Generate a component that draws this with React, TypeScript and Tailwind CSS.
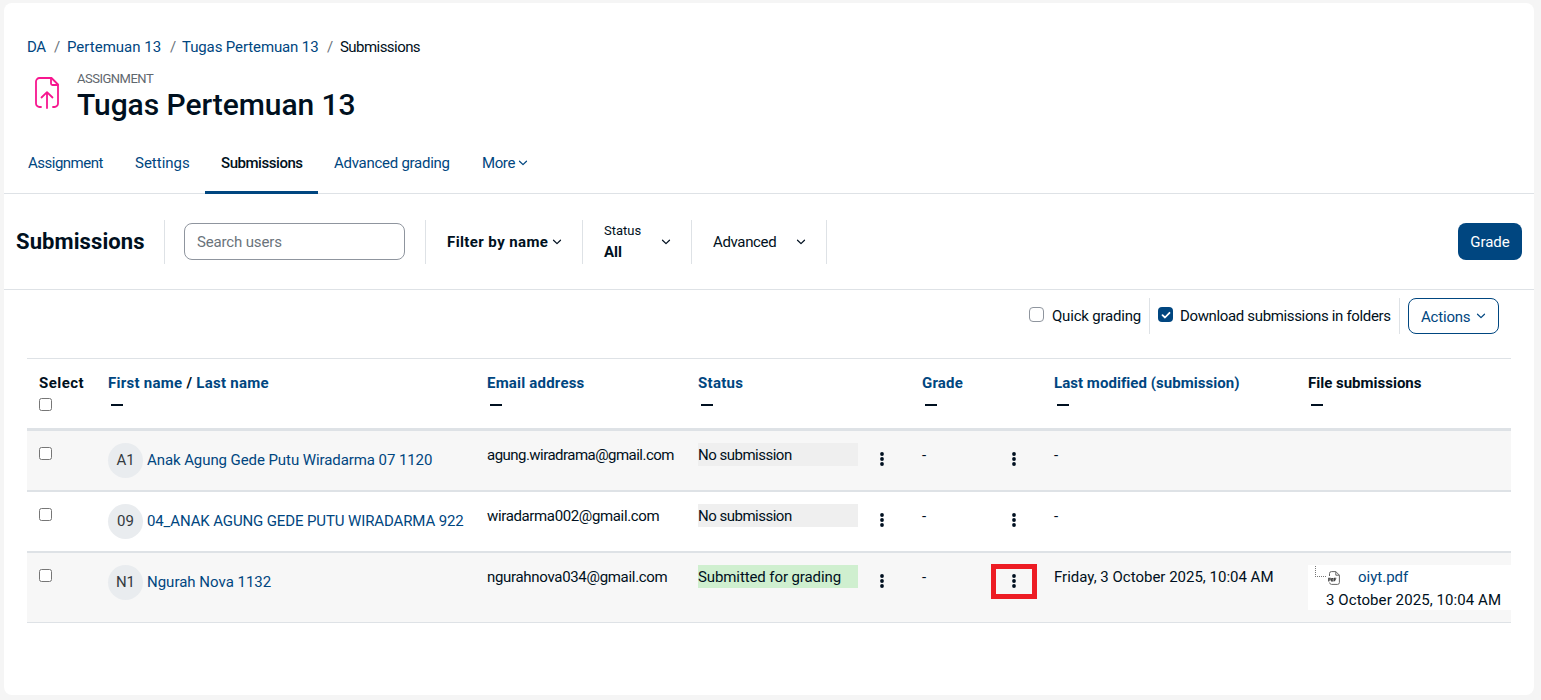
import { clsx } from "clsx";

interface Submission {
  initials: string;
  name: string;
  nameClass: string;
  email: string;
  emailClass: string;
  status: string;
  statusClass: string;
  modified: string;
  file?: { name: string; date: string };
}

const submissions: Submission[] = [
  {
    initials: "A1",
    name: "Anak Agung Gede Putu Wiradarma 07 1120",
    nameClass: "tracking-[-0.08px]",
    email: "agung.wiradrama@gmail.com",
    emailClass: "tracking-[-0.53px]",
    status: "No submission",
    statusClass: "bg-[#efefef] tracking-[-0.5px]",
    modified: "-",
  },
  {
    initials: "09",
    name: "04_ANAK AGUNG GEDE PUTU WIRADARMA 922",
    nameClass: "tracking-[-0.12px]",
    email: "wiradarma002@gmail.com",
    emailClass: "tracking-[-0.36px]",
    status: "No submission",
    statusClass: "bg-[#efefef] tracking-[-0.5px]",
    modified: "-",
  },
  {
    initials: "N1",
    name: "Ngurah Nova 1132",
    nameClass: "",
    email: "ngurahnova034@gmail.com",
    emailClass: "tracking-[-0.31px]",
    status: "Submitted for grading",
    statusClass: "bg-[#cfefcf] tracking-[-0.1px]",
    modified: "Friday, 3 October 2025, 10:04 AM",
    file: { name: "oiyt.pdf", date: "3 October 2025, 10:04 AM" },
  },
];

const columns = [
  { label: "Email address", link: true, className: "tracking-[0.2px]" },
  { label: "Status", link: true, className: "tracking-[0.3px]" },
  { label: "Grade", link: true, className: "tracking-[0.2px]" },
  { label: "Last modified (submission)", link: true, className: "tracking-[0.04px]" },
  { label: "File submissions", link: false, className: "" },
];

const rowGrid = "grid grid-cols-[69px_379px_211px_224px_132px_254px_215px]";

const Chevron = ({ className }: { className?: string }) => (
  <svg
    viewBox="0 0 10 6"
    className={clsx("h-[6px] w-[10px] shrink-0", className)}
    fill="none"
    stroke="currentColor"
    strokeWidth="1.2"
    strokeLinecap="round"
    strokeLinejoin="round"
  >
    <path d="M1.5 1.2 5 4.6 8.5 1.2" />
  </svg>
);

const Dots = () => (
  <svg viewBox="0 0 4 14" className="h-[14px] w-[4px]" fill="#001020">
    <circle cx="2" cy="2" r="1.9" />
    <circle cx="2" cy="7" r="1.9" />
    <circle cx="2" cy="12" r="1.9" />
  </svg>
);

const Checkbox = () => (
  <span className="block size-[13px] rounded-[2.5px] border border-[#767676] bg-white" />
);

const Divider = ({ className }: { className?: string }) => (
  <div className={clsx("w-px shrink-0 bg-[#dee2e6]", className)} />
);

const Dash = () => <div className="mt-2 ml-[3px] h-[2px] w-3 bg-[#001020]" />;

const AssignmentIcon = () => (
  <svg
    viewBox="0 0 24 32"
    className="h-8 w-6"
    fill="none"
    stroke="#f7168f"
    strokeWidth="1.8"
    strokeLinecap="round"
    strokeLinejoin="round"
  >
    <path d="M6 30H4.5A3.5 3.5 0 0 1 1 26.500V4.500A3.500 3.500 0 0 1 4.500 1H16.500L23 7.500V26.500A3.500 3.500 0 0 1 19.500 30H18" />
    <path d="M16 1.200V6.500A1.500 1.500 0 0 0 17.500 8H22.800" />
    <path d="M12 31V15.500M6.500 20.500 12 15.200 17.500 20.500" />
  </svg>
);

const PdfIcon = () => (
  <svg viewBox="0 0 12 14" className="h-[14px] w-3" fill="none" stroke="#666" strokeWidth="1">
    <path d="M1.500 5V2.500Q1.500.6 3.500.6H7.800L11.400 4.200V11.500Q11.400 13.400 9.500 13.400H3.500Q1.800 13.400 1.600 11.500" />
    <path d="M7.800.6V4.200H11.400" />
    <path stroke="#444" strokeWidth="1.100" d="M.7 10.500V7.200H2.200V9H.7M3.600 7.200V10H5V7.600H3.600M6.500 10.300V7.200H8.300M6.500 8.700H8" />
  </svg>
);

const Header = () => (
  <header>
    <nav className="flex h-[23px] pl-[23px] leading-[23px] whitespace-nowrap text-[#004680]">
      <a className="w-[27px] tracking-[-0.5px]">DA</a>
      <span className="w-[13px] text-[#6a737b]">/</span>
      <a className="w-[103px]">Pertemuan 13</a>
      <span className="w-[12px] text-[#6a737b]">/</span>
      <a className="w-[145px] tracking-[-0.12px]">Tugas Pertemuan 13</a>
      <span className="w-[13px] text-[#6a737b]">/</span>
      <span className="tracking-[-0.55px] text-[#001020]">Submissions</span>
    </nav>
    <div className="mt-[11px] flex pl-[31px]">
      <div className="mt-[7px] w-[42px]">
        <AssignmentIcon />
      </div>
      <div>
        <div className="text-[13px] leading-[18px] tracking-[-0.5px] text-[#5f676e]">ASSIGNMENT</div>
        <h1 className="text-[30px] leading-[34px] font-medium tracking-[-0.05px] text-[#001020]">
          Tugas Pertemuan 13
        </h1>
      </div>
    </div>
    <div className="mt-[10px] flex h-[62px] border-b border-[#dee2e6] pl-2 leading-[62px] text-[#004680]">
      <a className="w-[107px] pl-4 tracking-[-0.5px]">Assignment</a>
      <a className="w-[86px] pl-4">Settings</a>
      <a className="h-[62px] w-[113px] border-b-3 border-[#004680] pl-4 font-medium tracking-[-0.45px] text-[#001020]">
        Submissions
      </a>
      <a className="w-[148px] pl-4 tracking-[-0.27px]">Advanced grading</a>
      <a className="flex items-center pl-4">
        <span className="w-9 tracking-[-0.4px]">More</span>
        <Chevron />
      </a>
    </div>
  </header>
);

const Toolbar = () => (
  <div className="flex h-24 items-center border-b border-[#dee2e6] pr-3 pl-3 text-[#001020]">
    <h2 className="w-[148px] text-[22px] font-bold tracking-[0.1px]">Submissions</h2>
    <Divider className="h-11" />
    <div className="ml-[19px] flex h-[37px] w-[221px] items-center rounded-lg border border-[#8f959e] pt-0.5 pl-3 tracking-[-0.15px] text-[#6a737b]">
      Search users
    </div>
    <Divider className="ml-5 h-11" />
    <div className="ml-[21px] flex w-[135px] items-center">
      <span className="w-[105px] pt-0.5 font-bold tracking-[0.4px] whitespace-nowrap">
        Filter by name
      </span>
      <Chevron />
    </div>
    <Divider className="h-11" />
    <div className="ml-[21px] flex w-[87px] items-center">
      <div className="w-[57px]">
        <div className="text-[13px] leading-5">Status</div>
        <div className="leading-[22px] font-bold">All</div>
      </div>
      <Chevron />
    </div>
    <Divider className="h-11" />
    <div className="ml-[21px] flex w-[113px] items-center">
      <span className="w-[83px] pt-0.5 tracking-[-0.35px]">Advanced</span>
      <Chevron />
    </div>
    <Divider className="h-11" />
    <button className="ml-auto h-[37px] w-16 rounded-lg bg-[#004680] pt-0.5 text-white">
      Grade
    </button>
  </div>
);

const TableOptions = () => (
  <div className="flex h-[68px] justify-end pt-2 pr-[35px] leading-[36px] text-[#001020]">
    <span className="mt-[9px] size-[15px] rounded-[4px] border border-[#8f959e]" />
    <span className="ml-2 w-[97px] tracking-[-0.2px]">Quick grading</span>
    <Divider className="h-9" />
    <span className="mt-[9px] ml-2 flex size-[15px] items-center justify-center rounded-[4px] bg-[#004680]">
      <svg viewBox="0 0 10 10" className="size-[10px]" fill="none" stroke="#fff" strokeWidth="1.8">
        <path d="M1.500 5.200 4 7.500 8.500 2.800" strokeLinecap="round" strokeLinejoin="round" />
      </svg>
    </span>
    <span className="ml-[7px] w-[219px] tracking-[-0.35px] whitespace-nowrap">
      Download submissions in folders
    </span>
    <Divider className="h-9" />
    <button className="ml-2 flex h-9 w-[91px] items-center rounded-lg border border-[#004680] pl-3 text-[#004680]">
      <span className="w-[55px] pt-0.5 text-left tracking-[-0.2px]">Actions</span>
      <Chevron />
    </button>
  </div>
);

const FileCell = ({ file }: { file: { name: string; date: string } }) => (
  <div className="ml-3 h-[45px] bg-white whitespace-nowrap">
    <div className="flex h-[23px]">
      <span className="mt-px ml-[7px] h-[11px] w-[11px] border-b border-l border-dotted border-[#777]" />
      <span className="mt-[6px] ml-[2px] w-[30px]">
        <PdfIcon />
      </span>
      <a className="text-[#004680]">{file.name}</a>
    </div>
    <div className="pl-[18px] tracking-[0.08px]">{file.date}</div>
  </div>
);

const SubmissionRow = ({ item, index }: { item: Submission; index: number }) => {
  const last = index === submissions.length - 1;
  return (
    <div
      className={clsx(
        rowGrid,
        "pt-3 leading-[25px]",
        last ? "h-[70px] border-b border-[#dee2e6]" : "h-[61px] border-b-2 border-[#dee2e6]",
        index % 2 === 0 && "bg-[#f7f7f7]"
      )}
    >
      <div className="pt-1 pl-3">
        <Checkbox />
      </div>
      <div className="flex h-[35px] items-center pl-3">
        <span className="flex size-[35px] items-center justify-center rounded-full bg-[#e9ecef] text-[#343a40]">
          {item.initials}
        </span>
        <a className={clsx("ml-1 whitespace-nowrap text-[#004680]", item.nameClass)}>{item.name}</a>
      </div>
      <div className={clsx("pl-3", item.emailClass)}>{item.email}</div>
      <div className="flex pl-3">
        <div className={clsx("h-[23px] w-40", item.statusClass)}>{item.status}</div>
        <div className="mt-[9px] ml-[22px]">
          <Dots />
        </div>
      </div>
      <div className="flex pl-3">
        <span className="w-[69px]">-</span>
        {last ? (
          <div className="-mt-px flex h-[35px] w-[46px] items-start justify-center border-5 border-[#ed1c24] pt-[5px]">
            <Dots />
          </div>
        ) : (
          <div className="mt-[9px] ml-[21px]">
            <Dots />
          </div>
        )}
      </div>
      <div className="pl-3 whitespace-nowrap">{item.modified}</div>
      {item.file ? <FileCell file={item.file} /> : <div />}
    </div>
  );
};

const SubmissionTable = () => (
  <div className="ml-[23px] w-[1484px] border-t border-[#dee2e6] text-[#001020]">
    <div
      className={clsx(rowGrid, "h-[72px] border-b-3 border-[#dee2e6] pt-3 leading-[25px] font-bold")}
    >
      <div className="pl-3">
        <div className="mb-0.5 tracking-[0.45px]">Select</div>
        <Checkbox />
      </div>
      <div className="pl-3">
        <div className="tracking-[0.27px]">
          <a className="text-[#004680]">First name</a> / <a className="text-[#004680]">Last name</a>
        </div>
        <Dash />
      </div>
      {columns.map((col) => (
        <div key={col.label} className="pl-3 whitespace-nowrap">
          <div className={clsx(col.link && "text-[#004680]", col.className)}>{col.label}</div>
          <Dash />
        </div>
      ))}
    </div>
    {submissions.map((item, i) => (
      <SubmissionRow key={item.name} item={item} index={i} />
    ))}
  </div>
);

export default function App() {
  return (
    <div className="h-[700px] bg-[#f5f5f5] pt-[3px] pl-1 font-['Roboto',sans-serif] text-[15px]">
      <main className="h-[692px] w-[1530px] rounded-lg bg-white pt-[33px]">
        <Header />
        <Toolbar />
        <TableOptions />
        <SubmissionTable />
      </main>
    </div>
  );
}
